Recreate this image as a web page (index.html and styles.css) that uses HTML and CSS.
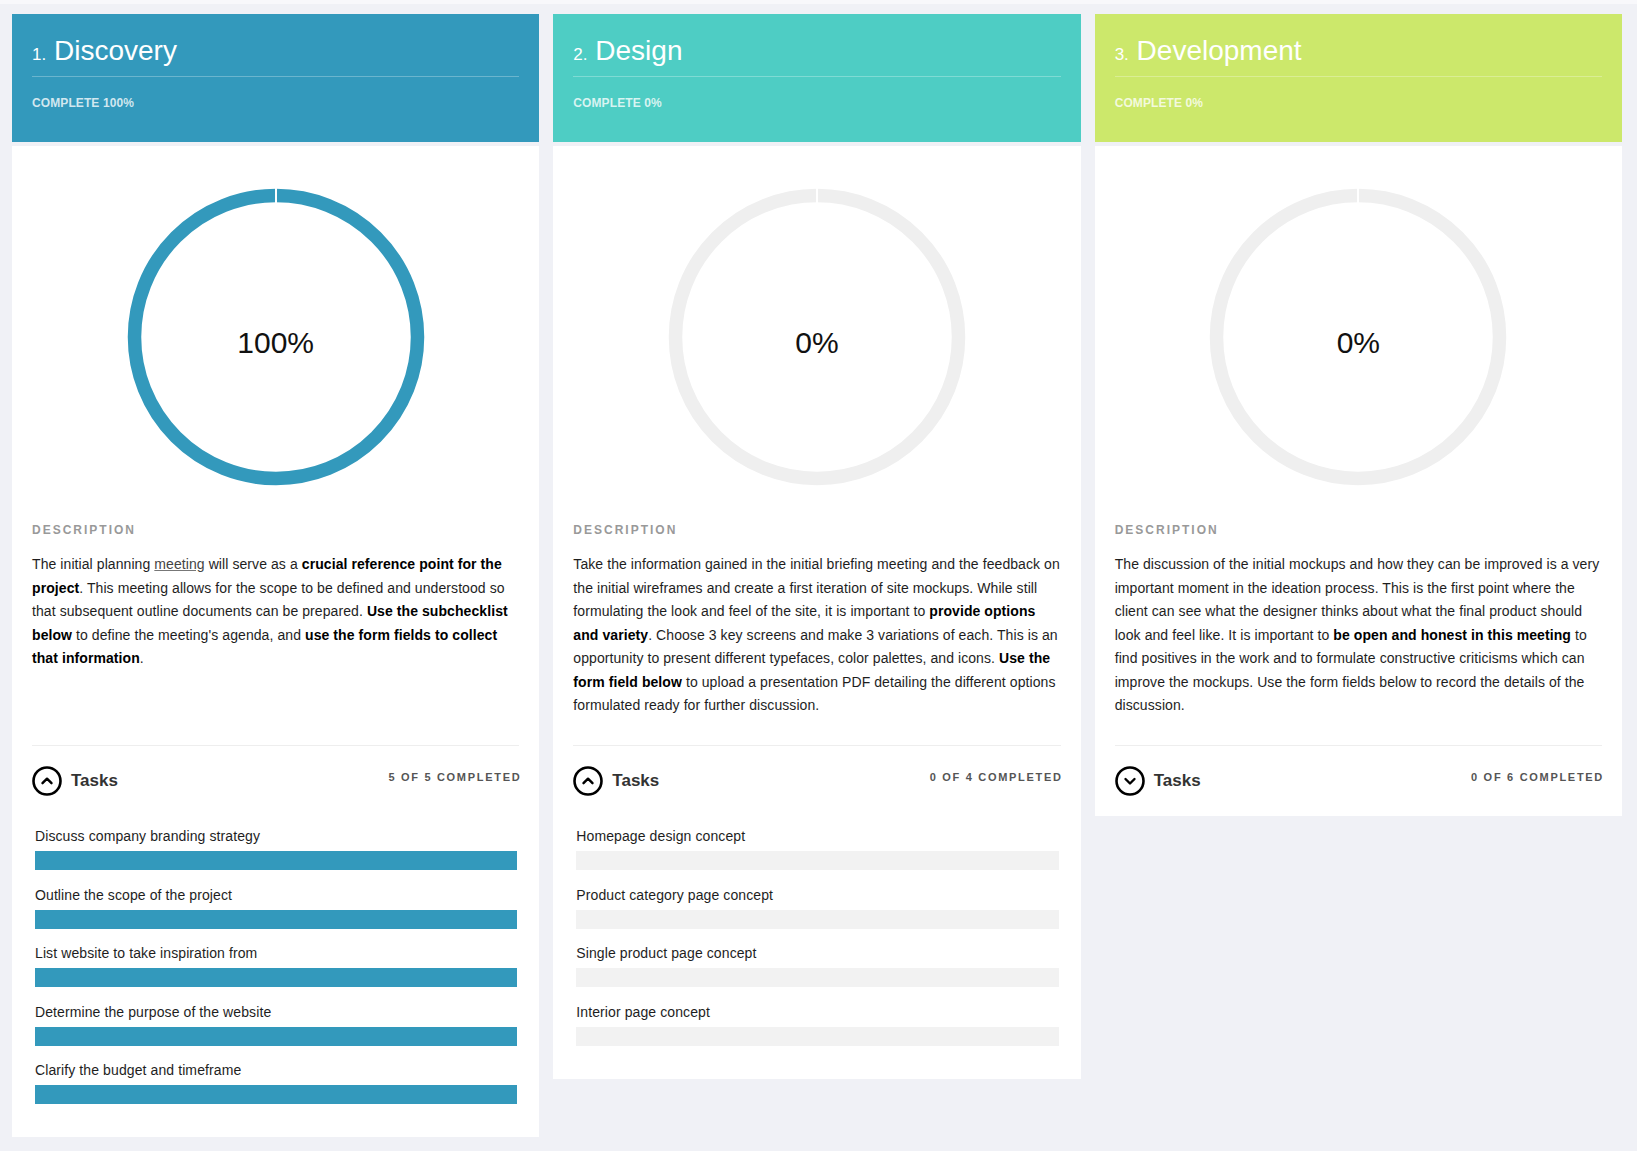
FILE: index.html
```html
<!DOCTYPE html>
<html lang="en">
<head>
<meta charset="utf-8">
<title>Checklist</title>
<link rel="stylesheet" href="styles.css">
</head>
<body>
<main class="board">
  <section class="card">
    <header class="card-head head-blue">
      <h2 class="title"><span class="num">1.</span> Discovery</h2>
      <p class="complete"><b>COMPLETE</b> <b>100%</b></p>
    </header>
    <div class="card-body">
      <div class="chart">
        <svg class="ring" width="300" height="300" viewBox="0 0 300 300">
          <circle cx="150" cy="150" r="141.5" fill="none" stroke="#3399bc" stroke-width="13.5"/>
          <rect x="149" y="0" width="2" height="16" fill="#fff"/>
        </svg>
        <span class="pct">100%</span>
      </div>
      <h3 class="label">DESCRIPTION</h3>
      <p class="desc">The initial planning <a href="#">meeting</a> will serve as a <b>crucial reference point for the project</b>. This meeting allows for the scope to be defined and understood so that subsequent outline documents can be prepared. <b>Use the subchecklist below</b> to define the meeting's agenda, and <b>use the form fields to collect that information</b>.</p>
      <div class="tasks-head">
        <div class="tasks-title">
          <svg class="toggle" width="30" height="30" viewBox="0 0 30 30"><circle cx="15" cy="15" r="13.5" fill="none" stroke="#000" stroke-width="2.6"/><path d="M10.5 17.2 L15 12.7 L19.5 17.2" fill="none" stroke="#000" stroke-width="2.4" stroke-linecap="round" stroke-linejoin="round"/></svg>
          <span>Tasks</span>
        </div>
        <span class="count">5 OF 5 COMPLETED</span>
      </div>
      <ul class="task-list">
        <li class="task"><span>Discuss company branding strategy</span><div class="bar done"></div></li>
        <li class="task"><span>Outline the scope of the project</span><div class="bar done"></div></li>
        <li class="task"><span>List website to take inspiration from</span><div class="bar done"></div></li>
        <li class="task"><span>Determine the purpose of the website</span><div class="bar done"></div></li>
        <li class="task"><span>Clarify the budget and timeframe</span><div class="bar done"></div></li>
      </ul>
    </div>
  </section>

  <section class="card">
    <header class="card-head head-teal">
      <h2 class="title"><span class="num">2.</span> Design</h2>
      <p class="complete"><b>COMPLETE</b> <b>0%</b></p>
    </header>
    <div class="card-body">
      <div class="chart">
        <svg class="ring" width="300" height="300" viewBox="0 0 300 300">
          <circle cx="150" cy="150" r="141.5" fill="none" stroke="#efefef" stroke-width="13.5"/>
          <rect x="149" y="0" width="2" height="16" fill="#fff"/>
        </svg>
        <span class="pct">0%</span>
      </div>
      <h3 class="label">DESCRIPTION</h3>
      <p class="desc">Take the information gained in the initial briefing meeting and the feedback on the initial wireframes and create a first iteration of site mockups. While still formulating the look and feel of the site, it is important to <b>provide options and variety</b>. Choose 3 key screens and make 3 variations of each. This is an opportunity to present different typefaces, color palettes, and icons. <b>Use the form field below</b> to upload a presentation PDF detailing the different options formulated ready for further discussion.</p>
      <div class="tasks-head">
        <div class="tasks-title">
          <svg class="toggle" width="30" height="30" viewBox="0 0 30 30"><circle cx="15" cy="15" r="13.5" fill="none" stroke="#000" stroke-width="2.6"/><path d="M10.5 17.2 L15 12.7 L19.5 17.2" fill="none" stroke="#000" stroke-width="2.4" stroke-linecap="round" stroke-linejoin="round"/></svg>
          <span>Tasks</span>
        </div>
        <span class="count">0 OF 4 COMPLETED</span>
      </div>
      <ul class="task-list">
        <li class="task"><span>Homepage design concept</span><div class="bar"></div></li>
        <li class="task"><span>Product category page concept</span><div class="bar"></div></li>
        <li class="task"><span>Single product page concept</span><div class="bar"></div></li>
        <li class="task"><span>Interior page concept</span><div class="bar"></div></li>
      </ul>
    </div>
  </section>

  <section class="card">
    <header class="card-head head-lime">
      <h2 class="title"><span class="num">3.</span> Development</h2>
      <p class="complete"><b>COMPLETE</b> <b>0%</b></p>
    </header>
    <div class="card-body">
      <div class="chart">
        <svg class="ring" width="300" height="300" viewBox="0 0 300 300">
          <circle cx="150" cy="150" r="141.5" fill="none" stroke="#efefef" stroke-width="13.5"/>
          <rect x="149" y="0" width="2" height="16" fill="#fff"/>
        </svg>
        <span class="pct">0%</span>
      </div>
      <h3 class="label">DESCRIPTION</h3>
      <p class="desc">The discussion of the initial mockups and how they can be improved is a very important moment in the ideation process. This is the first point where the client can see what the designer thinks about what the final product should look and feel like. It is important to <b>be open and honest in this meeting</b> to find positives in the work and to formulate constructive criticisms which can improve the mockups. Use the form fields below to record the details of the discussion.</p>
      <div class="tasks-head">
        <div class="tasks-title">
          <svg class="toggle" width="30" height="30" viewBox="0 0 30 30"><circle cx="15" cy="15" r="13.5" fill="none" stroke="#000" stroke-width="2.6"/><path d="M10.5 13 L15 17.5 L19.5 13" fill="none" stroke="#000" stroke-width="2.4" stroke-linecap="round" stroke-linejoin="round"/></svg>
          <span>Tasks</span>
        </div>
        <span class="count">0 OF 6 COMPLETED</span>
      </div>
    </div>
  </section>
</main>
</body>
</html>
```

FILE: styles.css
```css
* { box-sizing: border-box; }

html, body {
  margin: 0;
  padding: 0;
}

body {
  background: #f0f1f6;
  border-top: 4px solid #f8f8fb;
  font-family: "Liberation Sans", Arial, Helvetica, sans-serif;
  color: #1e1e1e;
}

.board {
  display: grid;
  grid-template-columns: repeat(3, 1fr);
  gap: 14px;
  padding: 10px 15px 20px 12px;
  align-items: start;
}

.card {
  display: flex;
  flex-direction: column;
  gap: 4px;
}

.card-head {
  height: 128px;
  padding: 20px 20px 0;
  color: #fff;
}

.head-blue { background: #3399bc; }
.head-teal { background: #4ecdc4; }
.head-lime { background: #cce86b; }

.title {
  margin: 0;
  font-size: 28px;
  line-height: 34px;
  font-weight: normal;
  padding-bottom: 4px;
  border-bottom: 1px solid rgba(255, 255, 255, 0.28);
}

.num {
  font-size: 17px;
}

.complete {
  margin: 19px 0 0;
  font-size: 12px;
  line-height: 14px;
  color: rgba(255, 255, 255, 0.78);
  letter-spacing: 0.1px;
}

.card-body {
  background: #fff;
  padding: 41px 20px 0;
}

.chart {
  position: relative;
  width: 300px;
  height: 300px;
  margin: 0 auto;
}

.ring {
  display: block;
}

.pct {
  position: absolute;
  inset: 0;
  padding-top: 12px;
  display: flex;
  align-items: center;
  justify-content: center;
  font-size: 30px;
  color: #111;
}

.label {
  margin: 36px 0 0;
  font-size: 12px;
  line-height: 14px;
  letter-spacing: 2px;
  color: #999;
  font-weight: bold;
}

.desc {
  margin: 16px 0 0;
  min-height: 165px;
  font-size: 14px;
  line-height: 23.5px;
  letter-spacing: 0.08px;
  color: #1e1e1e;
}

.desc b {
  color: #000;
}

.desc a {
  color: #444;
  text-decoration: underline;
  text-decoration-color: #777;
}

.tasks-head {
  margin-top: 27px;
  border-top: 1px solid #eeeeee;
  height: 71px;
  display: flex;
  align-items: center;
  justify-content: space-between;
}

.tasks-title {
  display: flex;
  align-items: center;
  gap: 9px;
  font-size: 17px;
  font-weight: bold;
  color: #333;
}

.toggle {
  display: block;
}

.count {
  font-size: 11px;
  font-weight: bold;
  letter-spacing: 1.7px;
  color: #555;
  margin-top: -8px;
  margin-right: -2px;
}

.task-list {
  list-style: none;
  margin: 0;
  padding: 12px 2px 33px 3px;
  display: flex;
  flex-direction: column;
  gap: 16.5px;
}

.task {
  display: flex;
  flex-direction: column;
  gap: 7px;
  font-size: 14px;
  line-height: 16px;
  letter-spacing: 0.1px;
  color: #1e1e1e;
}

.bar {
  height: 19px;
  background: #f2f2f2;
}

.bar.done {
  background: #3399bc;
}
```
